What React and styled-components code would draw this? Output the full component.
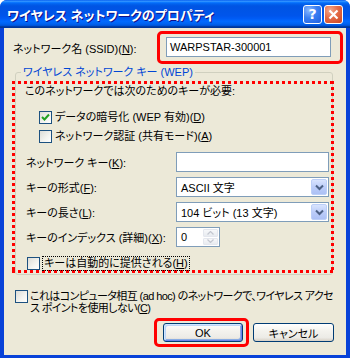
import styled, { createGlobalStyle, css } from 'styled-components'

const GlobalStyle = createGlobalStyle`
  html, body {
    margin: 0;
    padding: 0;
    background: #fff;
  }
  body {
    font-family: "Liberation Sans", "Noto Sans CJK JP", sans-serif;
    font-size: 11px;
    font-feature-settings: "palt";
    color: #000;
  }
`

const Window = styled.div`
  width: 350px;
  height: 358px;
  display: flex;
  flex-direction: column;
  overflow: hidden;
  border-radius: 7px 7px 0 0;
  background: #0842d8;
`

const TitleBar = styled.div`
  height: 28px;
  flex: none;
  display: flex;
  align-items: center;
  padding: 0 7px 0 7px;
  background: linear-gradient(
    to bottom,
    #0058ee 0%, #3593ff 4%, #288eff 6%, #127dff 8%, #036ffc 10%,
    #0262ee 14%, #0057e5 20%, #0054e3 24%, #0055eb 56%, #005bf5 66%,
    #026afe 76%, #0062ef 86%, #0052d6 92%, #0040ab 94%, #003092 100%
  );
`

const Title = styled.div`
  flex: 1;
  color: #fff;
  font-size: 13px;
  font-weight: bold;
  text-shadow: 1px 1px #0f1089;
  white-space: nowrap;
  padding-top: 1px;
`

const CaptionButtons = styled.div`
  display: flex;
  gap: 2px;
`

const CaptionButton = styled.div`
  width: 19px;
  height: 19px;
  box-sizing: border-box;
  border: 1px solid #fff;
  border-radius: 3px;
  display: flex;
  align-items: center;
  justify-content: center;
  color: #fff;
  font-family: "DejaVu Sans", sans-serif;
  font-weight: bold;
  font-size: 14px;
  ${(p) => p.$close
    ? css`background: radial-gradient(circle at 30% 25%, #f4a88c 0%, #e46b47 45%, #cd4420 100%);`
    : css`background: radial-gradient(circle at 30% 25%, #8bb8ff 0%, #3a7ff2 45%, #1f5fe0 100%);`}
`

const Frame = styled.div`
  flex: 1;
  display: flex;
  flex-direction: column;
  background: #ece9d8;
  margin: 0 4px 3px 4px;
  padding: 3px 3px 0 9px;
`

const Row = styled.div`
  display: flex;
  align-items: center;
  justify-content: space-between;
`

const SsidRow = styled(Row)`
  height: 33px;
`

const Label = styled.span`
  white-space: nowrap;
`

const U = styled.span`
  text-decoration: underline;
`

const Highlight = styled.div`
  box-sizing: border-box;
  border: 3px solid #ff0000;
  border-radius: 5px;
  display: flex;
  align-items: center;
  width: ${(p) => p.$w}px;
  height: ${(p) => p.$h}px;
  padding: ${(p) => p.$pad};
`

const TextBox = styled.div`
  box-sizing: border-box;
  height: 20px;
  width: ${(p) => (p.$w ? `${p.$w}px` : '100%')};
  border: 1px solid #7f9db9;
  background: #fff;
  padding: 0 3px;
  display: flex;
  align-items: center;
  white-space: nowrap;
`

const Group = styled.fieldset`
  margin: 1px 10px 0 2px;
  padding: 2px 0 1px 0;
  border: 1px solid #d0d0bf;
  border-radius: 3px;
  min-width: 0;
`

const Legend = styled.legend`
  color: #0046d5;
  padding: 0 2px;
  margin-left: 5px;
  line-height: 14px;
`

const dots = (dir) =>
  `repeating-linear-gradient(${dir}, #ff0000 0 3px, transparent 3px 6px)`

const DottedFrame = styled.div`
  margin: 0 -2px 0 -4px;
  padding: 4px 5px 3px 13px;
  display: flex;
  flex-direction: column;
  background:
    ${dots('90deg')} left top / 100% 3px no-repeat,
    ${dots('90deg')} left bottom / 100% 3px no-repeat,
    ${dots('180deg')} left top / 3px 100% no-repeat,
    ${dots('180deg')} right top / 3px 100% no-repeat;
`

const Line = styled.div`
  line-height: 13px;
  height: 13px;
  white-space: nowrap;
`

const CheckRow = styled.label`
  display: flex;
  align-items: flex-start;
  gap: 3px;
  margin-top: ${(p) => p.$top || 0}px;
  margin-left: ${(p) => p.$indent || 0}px;
  line-height: 13px;
`

const Box = styled.span`
  flex: none;
  width: 13px;
  height: 13px;
  box-sizing: border-box;
  border: 1px solid #1c5180;
  background: linear-gradient(135deg, #dcdcd7 0%, #f4f4f0 60%, #ffffff 100%);
  display: flex;
  align-items: center;
  justify-content: center;
`

const FocusText = styled.span`
  outline: 1px dotted #000;
  outline-offset: 0;
  padding: 0 1px;
  white-space: nowrap;
`

const FieldRow = styled(Row)`
  height: 20px;
  margin-top: ${(p) => p.$top}px;
  padding-left: 1px;
`

const Combo = styled.div`
  box-sizing: border-box;
  width: 153px;
  height: 20px;
  border: 1px solid #7f9db9;
  background: #fff;
  display: flex;
  align-items: center;
  padding: 1px 1px 1px 4px;
`

const ComboText = styled.span`
  flex: 1;
  white-space: nowrap;
`

const DropButton = styled.span`
  width: 16px;
  height: 16px;
  box-sizing: border-box;
  border: 1px solid #bccff8;
  border-radius: 2px;
  background: linear-gradient(to bottom, #d9e4fe 0%, #bccdf9 50%, #adc1f5 100%);
  display: flex;
  align-items: center;
  justify-content: center;
`

const SpinSlot = styled.div`
  width: 153px;
  display: flex;
`

const Spin = styled.div`
  box-sizing: border-box;
  width: 44px;
  height: 20px;
  border: 1px solid #7f9db9;
  background: #fff;
  display: flex;
  align-items: center;
  padding: 1px 1px 1px 4px;
`

const SpinButtons = styled.span`
  margin-left: auto;
  width: 15px;
  height: 16px;
  display: flex;
  flex-direction: column;
  gap: 1px;
`

const SpinPart = styled.span`
  flex: 1;
  border: 1px solid #e4e7ee;
  border-radius: 1px;
  background: linear-gradient(to bottom, #f7f8fa, #e8ebf0);
  display: flex;
  align-items: center;
  justify-content: center;
`

const AdhocRow = styled(CheckRow)`
  margin: 15px 0 0 2px;
  gap: 2px;
  line-height: 12px;
`

const AdhocText = styled.span`
  white-space: nowrap;
  letter-spacing: -0.6px;
`

const ButtonRow = styled.div`
  display: flex;
  justify-content: flex-end;
  align-items: center;
  gap: 4px;
  margin: 4px 9px 0 0;
`

const Button = styled.div`
  box-sizing: border-box;
  width: ${(p) => p.$w}px;
  height: 19px;
  border: 1px solid #003c74;
  border-radius: 3px;
  background: linear-gradient(to bottom, #ffffff 0%, #f4f3ee 40%, #ecebe6 80%, #d6d0c5 100%);
  display: flex;
  align-items: center;
  justify-content: center;
  ${(p) => p.$default && css`
    box-shadow: inset 1px 1px 0 #cee7ff, inset -1px -1px 0 #6982ee, inset 2px 2px 0 #bcd4f6, inset -2px -2px 0 #89ade4;
  `}
`

const Check = ({ checked }) => (
  <Box>
    {checked && (
      <svg width="9" height="9" viewBox="0 0 9 9">
        <path d="M1 4 L3.5 6.5 L8 1.5" fill="none" stroke="#21a121" strokeWidth="2" />
      </svg>
    )}
  </Box>
)

const Chevron = () => (
  <svg width="9" height="7" viewBox="0 0 9 7">
    <path d="M1 1.5 L4.5 5 L8 1.5" fill="none" stroke="#4d6185" strokeWidth="2" />
  </svg>
)

const Arrow = ({ up }) => (
  <svg width="7" height="4" viewBox="0 0 7 4">
    <path d={up ? 'M0.5 3.5 L3.5 0.5 L6.5 3.5' : 'M0.5 0.5 L3.5 3.5 L6.5 0.5'} fill="none" stroke="#c3c7d0" strokeWidth="1.2" />
  </svg>
)

const App = () => (
  <Window>
    <GlobalStyle />
    <TitleBar>
      <Title>ワイヤレス ネットワークのプロパティ</Title>
      <CaptionButtons>
        <CaptionButton>?</CaptionButton>
        <CaptionButton $close>
          <svg width="11" height="11" viewBox="0 0 11 11">
            <path d="M1.5 1.5 L9.5 9.5 M9.5 1.5 L1.5 9.5" stroke="#fff" strokeWidth="2.2" />
          </svg>
        </CaptionButton>
      </CaptionButtons>
    </TitleBar>

    <Frame>
      <SsidRow>
        <Label>ネットワーク名 (SSID)(<U>N</U>):</Label>
        <Highlight $w={186} $h={33} $pad="3px 9px 4px 6px">
          <TextBox>WARPSTAR-300001</TextBox>
        </Highlight>
      </SsidRow>

      <Group>
        <Legend>ワイヤレス ネットワーク キー (WEP)</Legend>
        <DottedFrame>
          <Line>このネットワークでは次のためのキーが必要:</Line>
          <CheckRow $top={13} $indent={14}>
            <Check checked />
            <span>データの暗号化 (WEP 有効)(<U>D</U>)</span>
          </CheckRow>
          <CheckRow $top={6} $indent={14}>
            <Check />
            <span>ネットワーク認証 (共有モード)(<U>A</U>)</span>
          </CheckRow>

          <FieldRow $top={9}>
            <Label>ネットワーク キー(<U>K</U>):</Label>
            <TextBox $w={153} />
          </FieldRow>
          <FieldRow $top={5}>
            <Label>キーの形式(<U>F</U>):</Label>
            <Combo>
              <ComboText>ASCII 文字</ComboText>
              <DropButton><Chevron /></DropButton>
            </Combo>
          </FieldRow>
          <FieldRow $top={5}>
            <Label>キーの長さ(<U>L</U>):</Label>
            <Combo>
              <ComboText>104 ビット (13 文字)</ComboText>
              <DropButton><Chevron /></DropButton>
            </Combo>
          </FieldRow>
          <FieldRow $top={5}>
            <Label>キーのインデックス (詳細)(<U>X</U>):</Label>
            <SpinSlot>
              <Spin>
                <span>0</span>
                <SpinButtons>
                  <SpinPart><Arrow up /></SpinPart>
                  <SpinPart><Arrow /></SpinPart>
                </SpinButtons>
              </Spin>
            </SpinSlot>
          </FieldRow>

          <CheckRow $top={10} $indent={2}>
            <Check />
            <FocusText>キーは自動的に提供される(<U>H</U>)</FocusText>
          </CheckRow>
        </DottedFrame>
      </Group>

      <AdhocRow>
        <Check />
        <AdhocText>
          これはコンピュータ相互 (ad hoc) のネットワークで、ワイヤレス アクセ<br />
          ス ポイントを使用しない(<U>C</U>)
        </AdhocText>
      </AdhocRow>

      <ButtonRow>
        <Highlight $w={95} $h={29} $pad="0 3px 0 6px">
          <Button $w={80} $default>OK</Button>
        </Highlight>
        <Button $w={81}>キャンセル</Button>
      </ButtonRow>
    </Frame>
  </Window>
)

export default App
